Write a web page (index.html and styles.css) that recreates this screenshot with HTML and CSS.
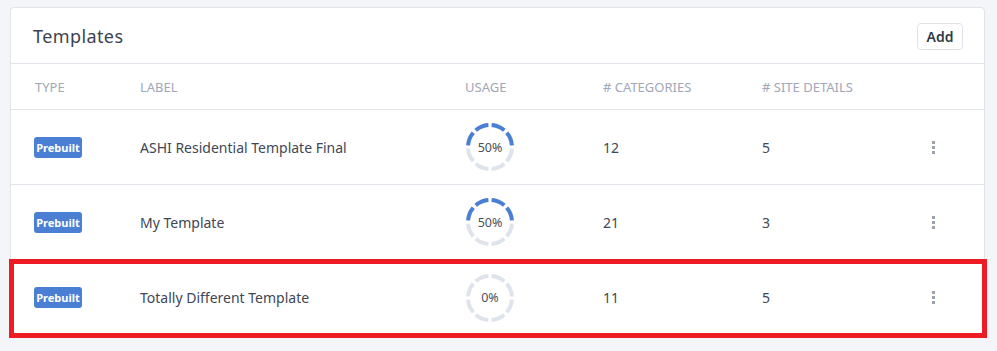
FILE: index.html
```html
<!DOCTYPE html>
<html lang="en">
<head>
  <meta charset="UTF-8">
  <title>Templates</title>
  <link rel="stylesheet" href="styles.css">
</head>
<body>
  <div class="card">
    <div class="card-header">
      <h2>Templates</h2>
      <button class="btn">Add</button>
    </div>
    <div class="table">
      <div class="row head">
        <div>Type</div>
        <div>Label</div>
        <div>Usage</div>
        <div># Categories</div>
        <div># Site Details</div>
        <div></div>
      </div>

      <div class="row">
        <div><span class="badge">Prebuilt</span></div>
        <div>ASHI Residential Template Final</div>
        <div>
          <div class="donut">
            <svg width="50" height="50" viewBox="0 0 50 50">
              <circle class="track" cx="25" cy="25" r="22" pathLength="80" transform="rotate(180 25 25)"></circle>
              <circle class="fill" cx="25" cy="25" r="22" pathLength="80" transform="rotate(180 25 25)"></circle>
            </svg>
            <span>50%</span>
          </div>
        </div>
        <div>12</div>
        <div>5</div>
        <div><span class="dots"><i></i><i></i><i></i></span></div>
      </div>

      <div class="row">
        <div><span class="badge">Prebuilt</span></div>
        <div>My Template</div>
        <div>
          <div class="donut">
            <svg width="50" height="50" viewBox="0 0 50 50">
              <circle class="track" cx="25" cy="25" r="22" pathLength="80" transform="rotate(180 25 25)"></circle>
              <circle class="fill" cx="25" cy="25" r="22" pathLength="80" transform="rotate(180 25 25)"></circle>
            </svg>
            <span>50%</span>
          </div>
        </div>
        <div>21</div>
        <div>3</div>
        <div><span class="dots"><i></i><i></i><i></i></span></div>
      </div>

      <div class="row marked">
        <div><span class="badge">Prebuilt</span></div>
        <div>Totally Different Template</div>
        <div>
          <div class="donut">
            <svg width="50" height="50" viewBox="0 0 50 50">
              <circle class="track" cx="25" cy="25" r="22" pathLength="80" transform="rotate(180 25 25)"></circle>
            </svg>
            <span>0%</span>
          </div>
        </div>
        <div>11</div>
        <div>5</div>
        <div><span class="dots"><i></i><i></i><i></i></span></div>
        <div class="highlight"></div>
      </div>
    </div>
  </div>
</body>
</html>
```

FILE: styles.css
```css
* {
  margin: 0;
  padding: 0;
  box-sizing: border-box;
}

body {
  background-color: #f4f5f9;
  font-family: 'Noto Sans', 'Open Sans', sans-serif;
  color: #404755;
  padding: 7px 12px 0 10px;
  height: 351px;
  overflow: hidden;
}

.card {
  background: #fff;
  border: 1px solid #e1e4ea;
  border-radius: 4px;
}

.card-header {
  height: 56px;
  display: flex;
  align-items: center;
  justify-content: space-between;
  padding: 0 21px 0 22px;
  border-bottom: 1px solid #e1e4ea;
}

.card-header h2 {
  font-size: 18px;
  font-weight: 400;
  letter-spacing: 0.4px;
  color: #3b4250;
}

.btn {
  font-family: inherit;
  font-size: 14px;
  font-weight: 600;
  color: #333a45;
  background: #fff;
  border: 1px solid #dfe2e8;
  border-radius: 4px;
  width: 46px;
  height: 27px;
  margin-top: 1px;
}

.row {
  display: grid;
  grid-template-columns: 105px 325px 138px 159px 170px 1fr;
  align-items: center;
  padding-left: 24px;
  height: 75px;
  font-size: 14px;
  border-bottom: 1px solid #e1e4ea;
}

.row:last-child {
  border-bottom: none;
}

.row.head {
  height: 46px;
  font-size: 13px;
  text-transform: uppercase;
  color: #a1a7b7;
}

.badge {
  display: inline-block;
  background: #4a7fd3;
  color: #fff;
  font-size: 11px;
  font-weight: 700;
  line-height: 21px;
  height: 21px;
  width: 48px;
  text-align: center;
  border-radius: 3px;
  margin-left: -1px;
}

.donut {
  position: relative;
  width: 50px;
  height: 50px;
}

.donut svg {
  display: block;
}

.donut circle {
  fill: none;
  stroke-width: 4;
}

.donut .track {
  stroke: #dee3ec;
  stroke-dasharray: 8 2;
  stroke-dashoffset: 9;
}

.donut .fill {
  stroke: #4a80d4;
  stroke-dasharray: 0 1 8 2 8 2 8 2 8 41;
}

.donut span {
  position: absolute;
  inset: 0;
  display: flex;
  align-items: center;
  justify-content: center;
  font-size: 12.5px;
  color: #4a505c;
}

.dots {
  display: flex;
  flex-direction: column;
  gap: 2px;
  width: 3px;
}

.dots i {
  display: block;
  width: 3px;
  height: 3px;
  background: #9ba1ad;
}

.marked {
  position: relative;
}

.highlight {
  position: absolute;
  top: -1px;
  left: -2px;
  right: -3px;
  bottom: -3px;
  border: 5px solid #ed1c24;
}
```
